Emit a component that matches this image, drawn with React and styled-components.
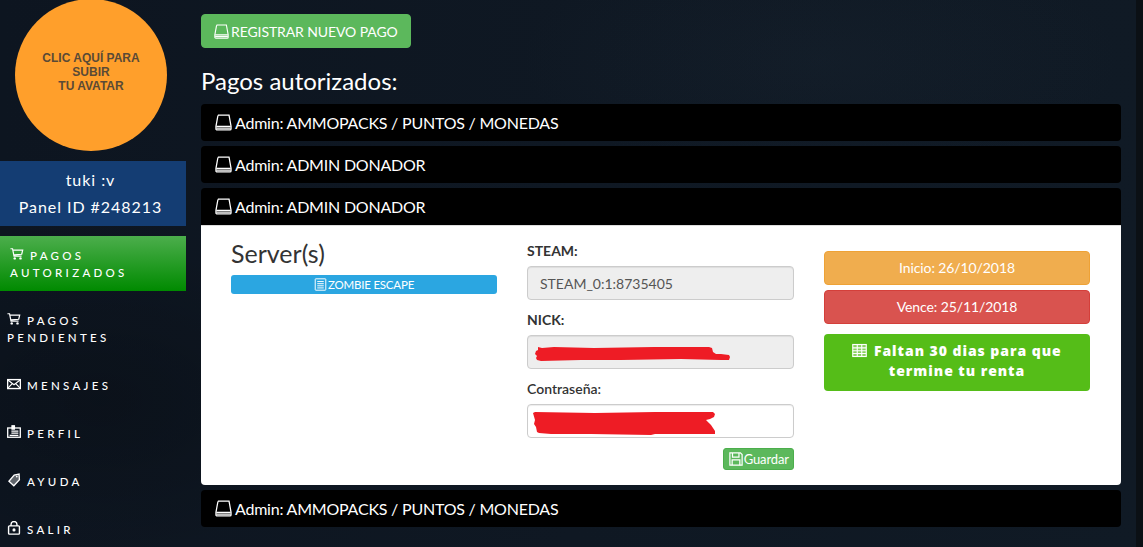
import React from 'react';
import styled, { createGlobalStyle } from 'styled-components';

const GlobalStyle = createGlobalStyle`
    html, body {
        margin: 0;
        height: 100%;
        overflow: hidden;
        background: #0f1823;
        font-family: Lato, "Liberation Sans", sans-serif;
    }
    * { box-sizing: border-box; }
`;

const Page = styled.div`
    display: grid;
    grid-template-columns: 186px 920px;
    column-gap: 15px;
    height: 547px;
    overflow: hidden;
    background:
        linear-gradient(90deg, transparent 1136px, #0b1015 1136px),
        radial-gradient(ellipse 300px 120px at 820px 60px, rgba(40, 55, 70, .14), transparent),
        radial-gradient(ellipse 260px 160px at 100px 400px, rgba(0, 0, 0, .2), transparent),
        linear-gradient(90deg, #0d1520 0, #0f1823 50%, #101a25 100%);
`;

const Sidebar = styled.aside`
    display: flex;
    flex-direction: column;
    align-items: stretch;
`;

const Avatar = styled.div`
    width: 152px;
    height: 152px;
    margin: -1px 0 10px 15px;
    flex: none;
    display: flex;
    align-items: center;
    justify-content: center;
    padding: 0 22px 6px;
    border-radius: 50%;
    background: #ff9f2b;
    color: #5a4a36;
    font: bold 12px/14px "Liberation Sans", Arial, sans-serif;
    text-align: center;
`;

const UserBox = styled.div`
    height: 65px;
    margin-bottom: 10px;
    padding: 6px 5px 0 0;
    background: #143d73;
    color: #fff;
    font-size: 16px;
    line-height: 26.5px;
    letter-spacing: .95px;
    text-align: center;
`;

const MenuItem = styled.div`
    height: ${p => p.$height}px;
    padding: ${p => p.$top}px 7px 0 ${p => p.$active ? 10 : 7}px;
    color: #fff;
    font-size: 11.5px;
    font-weight: 500;
    line-height: 17px;
    letter-spacing: 3.3px;
    background: ${p => p.$active ? 'linear-gradient(#4cae4c, #008a00)' : 'transparent'};
    svg { margin: 0 6px -1px 0; }
`;

const Main = styled.main`
    padding-top: 14px;
`;

const RegisterButton = styled.button`
    display: flex;
    align-items: center;
    gap: 2px;
    height: 34px;
    padding: 0 12px;
    border: 1px solid #5cb85c;
    border-radius: 4px;
    background: #5cb85c;
    color: #fff;
    font: 14px Lato, sans-serif;
    letter-spacing: -.1px;
`;

const Heading = styled.h2`
    margin: 18px 0 9px;
    color: #fff;
    font-size: 24px;
    font-weight: 400;
    line-height: 29px;
`;

const Accordion = styled.div`
    display: flex;
    flex-direction: column;
    gap: 5px;
`;

const Entry = styled.section`
    border-radius: 4px;
    overflow: hidden;
`;

const EntryHead = styled.div`
    display: flex;
    align-items: center;
    gap: 3px;
    height: 37px;
    padding: 0 14px;
    background: #000;
    color: #fff;
    font-size: 16px;
    letter-spacing: -.22px;
`;

const EntryBody = styled.div`
    display: grid;
    grid-template-columns: 266px 267px 266px;
    column-gap: 30px;
    height: 260px;
    padding: 15px 30px 0;
    border-top: 1px solid #ddd;
    background: #fff;
`;

const ServerTitle = styled.h3`
    margin: -2px 0 7px;
    color: #333;
    font-size: 25px;
    font-weight: 400;
    line-height: 29px;
`;

const ServerTag = styled.div`
    display: flex;
    align-items: center;
    justify-content: center;
    gap: 1px;
    height: 19px;
    border-radius: 3px;
    background: #2ba6e1;
    color: #fff;
    font-size: 11.5px;
    letter-spacing: -.2px;
`;

const Form = styled.div`
    display: flex;
    flex-direction: column;
`;

const FieldLabel = styled.label`
    margin-bottom: 5px;
    color: #333;
    font-size: 14px;
    font-weight: ${p => p.$plain ? 600 : 700};
    line-height: 20px;
`;

const Field = styled.div`
    position: relative;
    height: 34px;
    margin-bottom: 10px;
    padding: 0 12px;
    border: 1px solid #ccc;
    border-radius: 4px;
    background: ${p => p.$disabled ? '#eee' : '#fff'};
    color: #555;
    font-size: 14px;
    line-height: 33px;
    box-shadow: inset 0 1px 1px rgba(0, 0, 0, .075);
`;

const Redaction = styled.svg`
    position: absolute;
    left: ${p => p.$left}px;
    top: ${p => p.$top}px;
`;

const SaveRow = styled.div`
    display: flex;
    justify-content: flex-end;
`;

const SaveButton = styled.button`
    display: flex;
    align-items: center;
    gap: 1px;
    height: 22px;
    padding: 0 4px 0 5px;
    border: 1px solid #4cae4c;
    border-radius: 3px;
    background: #5cb85c;
    color: #fff;
    font: 13px Lato, sans-serif;
    letter-spacing: -.1px;
`;

const Dates = styled.div`
    display: flex;
    flex-direction: column;
    padding-top: 10px;
`;

const DateBadge = styled.div`
    height: 34px;
    margin-bottom: 5px;
    border: 1px solid ${p => p.$border};
    border-radius: 4px;
    background: ${p => p.$color};
    color: #fff;
    font-size: 14px;
    line-height: 32px;
    letter-spacing: -.1px;
    text-align: center;
`;

const Remaining = styled.div`
    height: 57px;
    margin-top: 5px;
    padding: 7px 20px 0;
    border-radius: 4px;
    background: #55bd18;
    color: #fff;
    font-family: "Open Sans", sans-serif;
    font-size: 14px;
    font-weight: 800;
    line-height: 20px;
    letter-spacing: .95px;
    text-align: center;
    svg { margin: 0 2px -2px 0; }
`;

const Glyph = ({ size = 17, children }) => (
    <svg width={size} height={size} viewBox="0 0 16 16" fill="none" stroke="currentColor" strokeWidth="1.2" style={{ flex: 'none' }}>
        {children}
    </svg>
);

const BookIcon = ({ size }) => (
    <Glyph size={size}>
        <path d="M3.2 1h10l1.9 10.6V14a1 1 0 0 1-1 1H1.9a1 1 0 0 1-1-1v-2.4L2.6 2.2z" />
        <path d="M1.2 11.6h13.6M1.2 13.3h13.6" />
    </Glyph>
);

const CartIcon = ({ size = 14 }) => (
    <Glyph size={size}>
        <path d="M.5 2h2.4l1.7 8.3h8.6M3.3 3.6h11.2l-1.1 4.7-8.8.7" strokeWidth="1.4" />
        <circle cx="5.4" cy="13" r="1.4" fill="currentColor" stroke="none" />
        <circle cx="12" cy="13" r="1.4" fill="currentColor" stroke="none" />
    </Glyph>
);

const MailIcon = ({ size = 14 }) => (
    <Glyph size={size}>
        <rect x=".7" y="3" width="14.6" height="10.2" strokeWidth="1.6" />
        <path d="M1 3.4l7 5.4 7-5.4M1 12.8l5-5.2M15 12.8l-5-5.2" strokeWidth="1.4" />
    </Glyph>
);

const IdIcon = ({ size = 14 }) => (
    <Glyph size={size}>
        <rect x=".8" y="3.4" width="14.4" height="10.6" strokeWidth="1.5" />
        <rect x="5.6" y=".8" width="3" height="4" fill="currentColor" />
        <path d="M5 7h8M5 9.4h8M3 11.8h10" strokeWidth="1.4" />
    </Glyph>
);

const TagIcon = ({ size = 14 }) => (
    <Glyph size={size}>
        <path d="M13.8 1.2l.4 6.4-6.4 7-5.6-5.2 6-7z" fill="currentColor" fillOpacity=".35" strokeWidth="1.5" />
        <circle cx="11.2" cy="4" r="1" fill="currentColor" stroke="none" />
    </Glyph>
);

const LockIcon = ({ size = 14 }) => (
    <Glyph size={size}>
        <rect x="1.8" y="5.6" width="12.4" height="9.4" rx="1" strokeWidth="1.6" />
        <path d="M4.6 5.6V4a3.4 3.4 0 0 1 6.8 0v1.6" strokeWidth="1.6" />
        <circle cx="8" cy="10.2" r="1.8" fill="currentColor" stroke="none" />
    </Glyph>
);

const ListIcon = ({ size = 13 }) => (
    <Glyph size={size}>
        <rect x="1.5" y="1" width="13" height="14" rx=".6" />
        <path d="M4 4.4h8M4 7h8M4 9.6h8M4 12.2h8" />
    </Glyph>
);

const SaveIcon = ({ size = 14 }) => (
    <Glyph size={size}>
        <path d="M1 1h12l2 2v12H1z" strokeWidth="1.4" />
        <path d="M4 1.2v4.6h7.4V1.2M3.6 15V9h8.8v6" strokeWidth="1.4" />
    </Glyph>
);

const GridIcon = ({ size = 15 }) => (
    <Glyph size={size}>
        <rect x=".8" y="1.6" width="14.4" height="12.8" fill="currentColor" fillOpacity=".3" />
        <path d="M5.6 1.6v12.8M10.4 1.6v12.8M.8 5.2h14.4M.8 8.2h14.4M.8 11.2h14.4" />
    </Glyph>
);

const App = () => (
    <Page>
        <GlobalStyle />
        <Sidebar>
            <Avatar>CLIC AQUÍ PARA SUBIR<br />TU AVATAR</Avatar>
            <UserBox>
                tuki :v<br />
                Panel ID #248213
            </UserBox>
            <MenuItem $active $height={55} $top={11}><CartIcon />PAGOS AUTORIZADOS</MenuItem>
            <MenuItem $height={76} $top={21}><CartIcon />PAGOS PENDIENTES</MenuItem>
            <MenuItem $height={48} $top={10}><MailIcon />MENSAJES</MenuItem>
            <MenuItem $height={48} $top={10}><IdIcon />PERFIL</MenuItem>
            <MenuItem $height={48} $top={10}><TagIcon />AYUDA</MenuItem>
            <MenuItem $height={48} $top={10}><LockIcon />SALIR</MenuItem>
        </Sidebar>
        <Main>
            <RegisterButton><BookIcon size={15} />REGISTRAR NUEVO PAGO</RegisterButton>
            <Heading>Pagos autorizados:</Heading>
            <Accordion>
                <Entry><EntryHead><BookIcon />Admin: AMMOPACKS / PUNTOS / MONEDAS</EntryHead></Entry>
                <Entry><EntryHead><BookIcon />Admin: ADMIN DONADOR</EntryHead></Entry>
                <Entry>
                    <EntryHead><BookIcon />Admin: ADMIN DONADOR</EntryHead>
                    <EntryBody>
                        <div>
                            <ServerTitle>Server(s)</ServerTitle>
                            <ServerTag><ListIcon />ZOMBIE ESCAPE</ServerTag>
                        </div>
                        <Form>
                            <FieldLabel>STEAM:</FieldLabel>
                            <Field $disabled>STEAM_0:1:8735405</Field>
                            <FieldLabel>NICK:</FieldLabel>
                            <Field $disabled>
                                <Redaction $left={7} $top={10} width="195" height="16" viewBox="0 0 195 16">
                                    <path d="M3 1l4 1 12-1 40 1 60-1 55 0 3 1 1 4 3 2 5 0 8 1 1 2-1 3-8 0-40-1-60 1-40 0-40 1-4-1-1-2 1-2-2-2 1-3 2-1z" fill="#ee1c25" />
                                </Redaction>
                            </Field>
                            <FieldLabel $plain>Contraseña:</FieldLabel>
                            <Field>
                                <Redaction $left={5} $top={7} width="185" height="23" viewBox="0 0 185 23">
                                    <path d="M0 1l2-1 60 1 60-1 58 0 2 2-1 3-4 2-4 1 3 3 2 2 2 3 2 3 0 3-60 0-4 1-60-1-40 0-12-1-2-1-1-5-2-3 1-4z" fill="#ee1c25" />
                                </Redaction>
                            </Field>
                            <SaveRow><SaveButton><SaveIcon />Guardar</SaveButton></SaveRow>
                        </Form>
                        <Dates>
                            <DateBadge $color="#f0ad4e" $border="#eea236">Inicio: 26/10/2018</DateBadge>
                            <DateBadge $color="#d9534f" $border="#d43f3a">Vence: 25/11/2018</DateBadge>
                            <Remaining><GridIcon /> Faltan 30 dias para que termine tu renta</Remaining>
                        </Dates>
                    </EntryBody>
                </Entry>
                <Entry><EntryHead><BookIcon />Admin: AMMOPACKS / PUNTOS / MONEDAS</EntryHead></Entry>
            </Accordion>
        </Main>
    </Page>
);

export default App;
